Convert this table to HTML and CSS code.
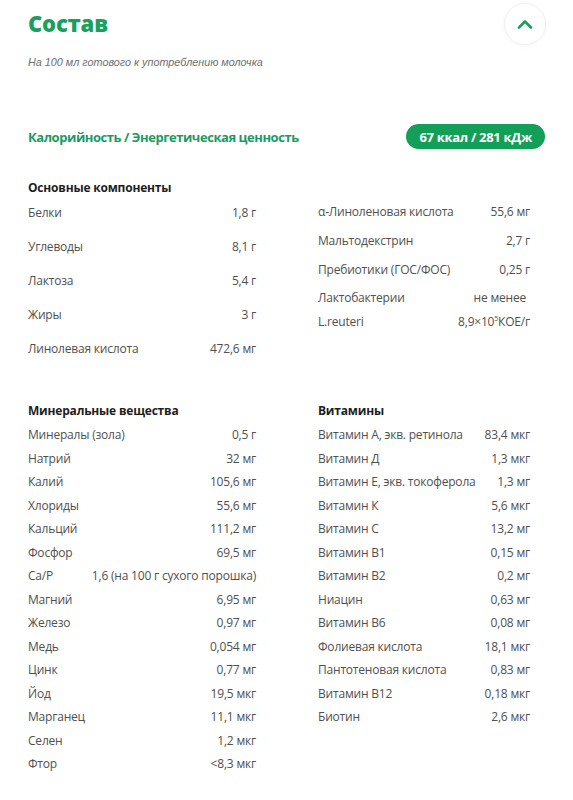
FILE: index.html
```html
<!DOCTYPE html>
<html lang="ru">
<head>
<meta charset="utf-8">
<title>Состав</title>
<link rel="stylesheet" href="styles.css">
</head>
<body>
<div class="page">
  <header class="head">
    <h1 class="title">Состав</h1>
    <button class="toggle" aria-label="Свернуть">
      <svg width="16" height="10" viewBox="0 0 16 10"><polyline points="2,8.5 8,2.5 14,8.5" fill="none" stroke="#1d9d62" stroke-width="2.6" stroke-linecap="round" stroke-linejoin="round"/></svg>
    </button>
  </header>
  <p class="sub">На 100 мл готового к употреблению молочка</p>

  <div class="energy">
    <span class="energy-label">Калорийность / Энергетическая ценность</span>
    <span class="badge">67 ккал / 281 кДж</span>
  </div>

  <h2 class="heading main-heading">Основные компоненты</h2>
  <div class="grid">
    <div class="col">
      <div class="row tall"><span>Белки</span><span>1,8 г</span></div>
      <div class="row tall"><span>Углеводы</span><span>8,1 г</span></div>
      <div class="row tall"><span>Лактоза</span><span>5,4 г</span></div>
      <div class="row tall"><span>Жиры</span><span>3 г</span></div>
      <div class="row tall"><span>Линолевая кислота</span><span>472,6 мг</span></div>
    </div>
    <div class="col right-main">
      <div class="row mid"><span>α-Линоленовая кислота</span><span>55,6 мг</span></div>
      <div class="row mid"><span>Мальтодекстрин</span><span>2,7 г</span></div>
      <div class="row mid"><span>Пребиотики (ГОС/ФОС)</span><span>0,25 г</span></div>
      <div class="row double"><span>Лактобактерии<br>L.reuteri</span><span class="val2"><span class="nm">не менее</span><br>8,9×10<sup>5</sup>КОЕ/г</span></div>
    </div>
  </div>

  <div class="grid second">
    <div class="col">
      <h2 class="heading sec">Минеральные вещества</h2>
      <div class="row"><span>Минералы (зола)</span><span>0,5 г</span></div>
      <div class="row"><span>Натрий</span><span>32 мг</span></div>
      <div class="row"><span>Калий</span><span>105,6 мг</span></div>
      <div class="row"><span>Хлориды</span><span>55,6 мг</span></div>
      <div class="row"><span>Кальций</span><span>111,2 мг</span></div>
      <div class="row"><span>Фосфор</span><span>69,5 мг</span></div>
      <div class="row"><span>Ca/P</span><span>1,6 (на 100 г сухого порошка)</span></div>
      <div class="row"><span>Магний</span><span>6,95 мг</span></div>
      <div class="row"><span>Железо</span><span>0,97 мг</span></div>
      <div class="row"><span>Медь</span><span>0,054 мг</span></div>
      <div class="row"><span>Цинк</span><span>0,77 мг</span></div>
      <div class="row"><span>Йод</span><span>19,5 мкг</span></div>
      <div class="row"><span>Марганец</span><span>11,1 мкг</span></div>
      <div class="row"><span>Селен</span><span>1,2 мкг</span></div>
      <div class="row"><span>Фтор</span><span>&lt;8,3 мкг</span></div>
    </div>
    <div class="col">
      <h2 class="heading sec">Витамины</h2>
      <div class="row"><span>Витамин А, экв. ретинола</span><span>83,4 мкг</span></div>
      <div class="row"><span>Витамин Д</span><span>1,3 мкг</span></div>
      <div class="row"><span>Витамин Е, экв. токоферола</span><span>1,3 мг</span></div>
      <div class="row"><span>Витамин К</span><span>5,6 мкг</span></div>
      <div class="row"><span>Витамин С</span><span>13,2 мг</span></div>
      <div class="row"><span>Витамин В1</span><span>0,15 мг</span></div>
      <div class="row"><span>Витамин В2</span><span>0,2 мг</span></div>
      <div class="row"><span>Ниацин</span><span>0,63 мг</span></div>
      <div class="row"><span>Витамин В6</span><span>0,08 мг</span></div>
      <div class="row"><span>Фолиевая кислота</span><span>18,1 мкг</span></div>
      <div class="row"><span>Пантотеновая кислота</span><span>0,83 мг</span></div>
      <div class="row"><span>Витамин В12</span><span>0,18 мкг</span></div>
      <div class="row"><span>Биотин</span><span>2,6 мкг</span></div>
    </div>
  </div>
</div>
</body>
</html>
```

FILE: styles.css
```css
* { box-sizing: border-box; }
html, body { margin: 0; padding: 0; background: #fff; }
body { font-family: "Open Sans", "Liberation Sans", sans-serif; color: #505050; }
.page { padding: 0 28px; }

.head { height: 46px; display: flex; align-items: center; justify-content: space-between; }
.title { margin: 0; font-family: "Open Sans", sans-serif; font-weight: 800; font-size: 22px; color: #1a9f5e; letter-spacing: -0.2px; }
.toggle { width: 42px; height: 42px; border-radius: 50%; border: 1px solid #f1f1f1; background: #fff; box-shadow: 0 1px 4px rgba(0,0,0,0.04); display: flex; align-items: center; justify-content: center; padding: 0; margin-right: -1px; margin-top: 2px; }

.sub { margin: 9px 0 0; font-size: 10.8px; line-height: 14px; font-style: italic; color: #6e6e6e; font-family: "Liberation Sans", Arial, sans-serif; }

.energy { margin-top: 55px; height: 25px; display: flex; align-items: center; justify-content: space-between; }
.energy-label { font-size: 13px; font-weight: 700; color: #1c9a62; letter-spacing: -0.45px; }
.badge { height: 25px; padding: 0 13px; border-radius: 13px; background: #139f58; color: #fff; font-weight: 700; font-size: 13px; display: flex; align-items: center; letter-spacing: -0.3px; }

.heading { margin: 0; font-size: 12px; font-weight: 700; color: #1e1e1e; letter-spacing: -0.2px; }
.main-heading { margin-top: 32px; line-height: 14px; }

.grid { display: grid; grid-template-columns: 228px 212px; column-gap: 62px; }
.col { display: flex; flex-direction: column; }
.right-main { padding-top: 2px; }

.row { display: flex; justify-content: space-between; align-items: center; height: 23.5px; font-size: 12px; white-space: nowrap; letter-spacing: -0.2px; }
.row.tall { height: 34px; }
.row.mid { height: 29px; }
.row.double { height: auto; align-items: flex-start; line-height: 24px; margin-top: 2px; }
.val2 { text-align: right; }
.nm { padding-right: 4px; }
sup { font-size: 7px; vertical-align: 5px; line-height: 0; }

.second { margin-top: 34px; }
.heading.sec { line-height: 24px; }
```
